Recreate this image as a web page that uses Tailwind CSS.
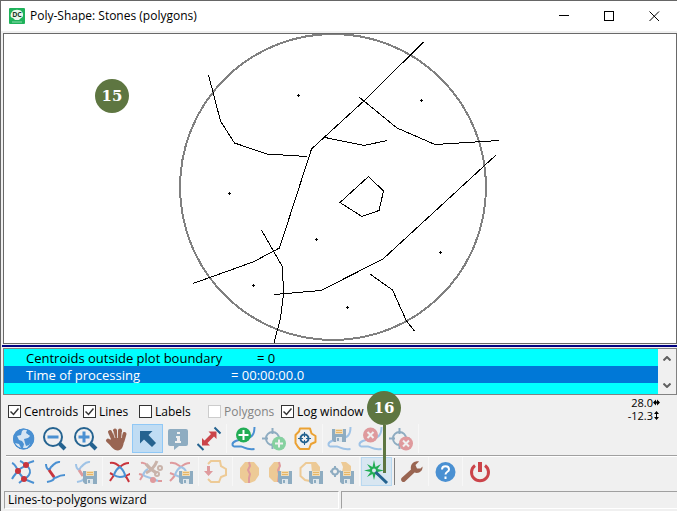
<!DOCTYPE html>
<html lang="en">
  <head>
    <meta charset="UTF-8" />
    <meta name="viewport" content="width=device-width, initial-scale=1.0" />
    <title>Poly-Shape: Stones (polygons)</title>
    <script src="https://cdn.jsdelivr.net/npm/@tailwindcss/browser@4"></script>
  </head>
  <body class="bg-[#f0f0f0] text-black font-['Open_Sans',sans-serif] text-[12px] leading-4">
    <!-- shared icon parts -->
    <svg class="hidden">
      <symbol id="disk" viewBox="0 0 14 13">
        <path d="M0 0H14V13H2L0 11Z" fill="#8eacc1" />
        <path d="M3 0H11V5H3Z" fill="#f0dcb8" />
        <path d="M4 1H10V2H4ZM4 3H10V4H4Z" fill="#e9b765" />
        <path d="M4 8H10V13H4Z" fill="#dfe7ec" />
        <path d="M5 9H7V12H5Z" fill="#8eacc1" />
      </symbol>
      <symbol id="curve" viewBox="0 0 25 25">
        <path
          d="M23.5 1C23.5 9 21 11 14 13C7 14 2 15 1.5 18C1 22 6 20 10 20.5C14 21 14 24 23.5 23"
          fill="none"
          stroke="currentColor"
          stroke-width="2"
        />
      </symbol>
      <symbol id="target" viewBox="0 0 25 25">
        <g fill="none" stroke="currentColor" stroke-width="2">
          <circle cx="10.5" cy="12.5" r="6.5" />
          <path d="M10.5 2V8M10.5 17V23M0 12.5H6M15 12.5H21" />
        </g>
      </symbol>
    </svg>

    <div class="flex min-h-screen flex-col border-t border-l border-[#666]">
      <header class="flex h-[30px] items-center bg-white pl-2">
        <svg class="h-4 w-4" viewBox="0 0 16 16">
          <rect width="16" height="16" rx="1" fill="#1fb25a" />
          <path
            d="M3 4C4 1 12 1 13 4C15 6 14 10 12 10L10 12H6L4 10C1 10 1 6 3 4Z"
            fill="#e9f7ee"
          />
          <path d="M3 14H13" stroke="#8fdcae" />
          <text
            x="8"
            y="9"
            text-anchor="middle"
            font-size="7"
            font-weight="700"
            fill="#1b3b2a"
          >DC</text>
        </svg>
        <h1 class="ml-[5px] flex-1">Poly-Shape: Stones (polygons)</h1>
        <button class="grid h-[30px] w-[45px] place-items-center" aria-label="Minimize">
          <svg class="h-[11px] w-[11px]" viewBox="0 0 11 11">
            <path d="M0 4.5H10" stroke="#000" />
          </svg>
        </button>
        <button class="grid h-[30px] w-[45px] place-items-center" aria-label="Maximize">
          <svg class="h-[11px] w-[11px]" viewBox="0 0 11 11">
            <rect x="0.5" y="0.5" width="9" height="9" fill="none" stroke="#000" />
          </svg>
        </button>
        <button class="grid h-[30px] w-[45px] place-items-center" aria-label="Close">
          <svg class="h-[11px] w-[11px]" viewBox="0 0 11 11">
            <path d="M0.5 0.5L10 10M10 0.5L0.5 10" stroke="#000" fill="none" />
          </svg>
        </button>
      </header>

      <!-- plot -->
      <main class="mt-[2px] ml-[2px] flex-1 border border-[#696969] bg-white">
        <svg class="block w-full" viewBox="4 34 672 309" shape-rendering="crispEdges">
          <circle cx="333" cy="187" r="153" fill="none" stroke="#808080" stroke-width="2" />
          <g fill="none" stroke="#000">
            <path d="M208.5 75L220.5 121L234.5 143L267 154L307 156.5" />
            <path d="M423.5 42L366 99L311.5 149L279.5 248L253 262L193 283.5" />
            <path d="M325 137.5L364 145.5L387 140.5" />
            <path d="M359 97L397 128L435 144.5L499 140.5" />
            <path d="M496 155L383 259L321 290.5L274 294.5" />
            <path d="M261.5 230L282.5 267L283.5 294L280.5 318L274 343" />
            <path d="M370 274L392.5 290L406.5 321L414.5 331" />
            <path d="M340 202.5L368.5 176.5L383.5 191L379 210.5L362 216.5Z" />
          </g>
          <path
            d="M297 95.5h3M298.5 94v3M420 100.5h3M421.5 99v3M228 193.5h3M229.5 192v3M315 239.5h3M316.5 238v3M252 285.5h3M253.5 284v3M439 252.5h3M440.5 251v3M346 307.5h3M347.5 306v3"
            stroke="#000"
          />
        </svg>
      </main>
      <div class="mt-px ml-px h-[2px] bg-[#000080]"></div>

      <!-- log -->
      <section class="mt-px ml-[2px] flex h-[47px] border border-[#828282] bg-[#00ffff]">
        <ul class="flex-1 text-[13px] leading-[19px]">
          <li class="flex h-[17px] pl-[22px]">
            <span class="w-[231px]">Centroids outside plot boundary</span><span>= 0</span>
          </li>
          <li class="flex h-[17px] bg-[#0078d7] pl-[22px] text-white">
            <span class="w-[205px]">Time of processing</span><span>= 00:00:00.0</span>
          </li>
        </ul>
        <div class="flex w-[18px] flex-col justify-between bg-[#f0f0f0]">
          <button class="grid h-[18px] place-items-center" aria-label="Scroll up">
            <svg class="h-[5px] w-2" viewBox="0 0 8 5">
              <path d="M0.5 4.5L4 1L7.5 4.5" fill="none" stroke="#606060" stroke-width="2" />
            </svg>
          </button>
          <button class="grid h-[18px] place-items-center" aria-label="Scroll down">
            <svg class="h-[5px] w-2" viewBox="0 0 8 5">
              <path d="M0.5 0.5L4 4L7.5 0.5" fill="none" stroke="#606060" stroke-width="2" />
            </svg>
          </button>
        </div>
      </section>

      <!-- layer switches -->
      <div class="flex h-[29px] items-center pr-[17px] pl-[7px]">
        <form class="grid flex-1 grid-cols-[75px_56px_69px_73px_auto] items-center pt-1">
          <label class="flex items-center gap-[3px]">
            <span class="grid place-items-center">
              <input type="checkbox" checked class="peer col-start-1 row-start-1 h-[13px] w-[13px] appearance-none border border-[#333] bg-white" />
              <svg class="pointer-events-none invisible col-start-1 row-start-1 h-[9px] w-[9px] peer-checked:visible" viewBox="0 0 9 9"><path d="M0.5 4.5L3.5 7.5L8.5 1.5" fill="none" stroke="#333" stroke-width="1.5" /></svg>
            </span>
            Centroids
          </label>
          <label class="flex items-center gap-[3px]">
            <span class="grid place-items-center">
              <input type="checkbox" checked class="peer col-start-1 row-start-1 h-[13px] w-[13px] appearance-none border border-[#333] bg-white" />
              <svg class="pointer-events-none invisible col-start-1 row-start-1 h-[9px] w-[9px] peer-checked:visible" viewBox="0 0 9 9"><path d="M0.5 4.5L3.5 7.5L8.5 1.5" fill="none" stroke="#333" stroke-width="1.5" /></svg>
            </span>
            Lines
          </label>
          <label class="flex items-center gap-[3px]">
            <span class="grid place-items-center">
              <input type="checkbox" class="peer col-start-1 row-start-1 h-[13px] w-[13px] appearance-none border border-[#333] bg-white" />
              <svg class="pointer-events-none invisible col-start-1 row-start-1 h-[9px] w-[9px] peer-checked:visible" viewBox="0 0 9 9"><path d="M0.5 4.5L3.5 7.5L8.5 1.5" fill="none" stroke="#333" stroke-width="1.5" /></svg>
            </span>
            Labels
          </label>
          <label class="flex items-center gap-[3px] text-[#838383]">
            <input type="checkbox" disabled class="h-[13px] w-[13px] appearance-none border border-[#ccc] bg-white" />
            Polygons
          </label>
          <label class="flex items-center gap-[3px]">
            <span class="grid place-items-center">
              <input type="checkbox" checked class="peer col-start-1 row-start-1 h-[13px] w-[13px] appearance-none border border-[#333] bg-white" />
              <svg class="pointer-events-none invisible col-start-1 row-start-1 h-[9px] w-[9px] peer-checked:visible" viewBox="0 0 9 9"><path d="M0.5 4.5L3.5 7.5L8.5 1.5" fill="none" stroke="#333" stroke-width="1.5" /></svg>
            </span>
            Log window
          </label>
        </form>
        <div class="self-start pt-px text-[11px] leading-[13px]">
          <div class="flex items-center justify-end">
            28.0
            <svg class="h-[7px] w-[7px]" viewBox="0 0 7 7">
              <path d="M0 3.5L3 0.5V6.5ZM7 3.5L4 0.5V6.5Z" />
              <path d="M1 3.5H6" stroke="#000" stroke-width="2" />
            </svg>
          </div>
          <div class="flex items-center justify-end">
            -12.3
            <svg class="h-[9px] w-[7px]" viewBox="0 0 7 9">
              <path d="M3.5 0L6 3H1ZM3.5 9L6 6H1Z" />
              <path d="M3.5 1V8" stroke="#000" />
            </svg>
          </div>
        </div>
      </div>

      <!-- edit tools -->
      <div class="flex h-[29px] pl-[7px]">
        <button class="grid h-[29px] w-[31px] place-items-center" title="Full view">
          <svg class="h-[25px] w-[25px]" viewBox="0 0 25 25">
            <circle cx="12.5" cy="13" r="10.5" fill="#4a90d2" />
            <path d="M13 3.5L16 4L15 7L18 9L21 8L22 12L18 12L16 15L19 18L16 22L12 22L13 18L11 15L8 14L6 10L10 9L11 5Z" fill="#d6e5f3" />
            <path d="M17 3.5C22 5 24 10 23 15L20 20L19 16L16 13L19 10L16 7Z" fill="#4a90d2" />
            <path d="M13 13L17 12L20 15L18 19L15 20L14 17Z" fill="#4a90d2" />
            <path d="M4 17L8 18L10 22C7 21 5 19 4 17Z" fill="#d6e5f3" />
            <circle cx="12.5" cy="13" r="10" fill="none" stroke="#4a90d2" />
          </svg>
        </button>
        <button class="grid h-[29px] w-[31px] place-items-center" title="Zoom out">
          <svg class="h-[25px] w-[25px]" viewBox="0 0 25 25" fill="none">
            <circle cx="11" cy="11" r="9" stroke="#256390" stroke-width="2" />
            <path d="M5.5 11H16.5" stroke="#4a90d2" stroke-width="3" />
            <path d="M17.5 17.5L23 23" stroke="#256390" stroke-width="4" />
          </svg>
        </button>
        <button class="grid h-[29px] w-[31px] place-items-center" title="Zoom in">
          <svg class="h-[25px] w-[25px]" viewBox="0 0 25 25" fill="none">
            <circle cx="11" cy="11" r="9" stroke="#256390" stroke-width="2" />
            <path d="M5.5 11H16.5M11 5.5V16.5" stroke="#4a90d2" stroke-width="3" />
            <path d="M17.5 17.5L23 23" stroke="#256390" stroke-width="4" />
          </svg>
        </button>
        <button class="grid h-[29px] w-[31px] place-items-center" title="Pan">
          <svg class="h-[25px] w-[25px]" viewBox="0 0 25 25">
            <g fill="none" stroke="#996552" stroke-width="4" stroke-linecap="round">
              <path d="M6 6L9.5 14M11 4.5L12 13M16 4.5V13M20.5 8L18.5 15M4 14.5L9 19" />
            </g>
            <path d="M8 12H20C20 18 19 24 14 24.5C9 24.5 7 20 4 16Z" fill="#996552" />
            <path d="M9 5L11 12M13.5 4V12M18 6L17.5 12" stroke="#f0f0f0" stroke-width="0.7" />
          </svg>
        </button>
        <button class="grid h-[29px] w-[31px] place-items-center border border-[#90c8f6] bg-[#c0dcf3]" title="Select" aria-pressed="true">
          <svg class="h-[25px] w-[25px]" viewBox="0 0 25 25">
            <path d="M5 5H17.5L13.5 9L21 17L17 21L9 13.5L5 17.5Z" fill="#256390" />
          </svg>
        </button>
        <button class="grid h-[29px] w-[31px] place-items-center" title="Info">
          <svg class="h-[25px] w-[25px]" viewBox="0 0 25 25">
            <path d="M4 3H20Q22 3 22 5V18Q22 20 20 20H13L8 24V20H4Q2 20 2 18V5Q2 3 4 3Z" fill="#8eacc1" />
            <path d="M11 6H14V8H11ZM10 10H14V15H15V17H9V15H11V12H10Z" fill="#f0f0f0" />
          </svg>
        </button>
        <button class="grid h-[29px] w-[31px] place-items-center" title="Measure">
          <svg class="h-[25px] w-[25px]" viewBox="0 0 25 25">
            <path d="M19.5 5.5V13L17 10.5L10.5 17L13 19.5H5V12L7.5 14.5L14 8L11.5 5.5Z" fill="#cb444a" />
            <path d="M0.5 18L6.5 24M17.5 1.5L23.5 7.5" stroke="#256390" stroke-width="2" />
          </svg>
        </button>
        <div class="flex w-[3px] justify-center"><i class="w-px bg-[#f7f7f7]"></i></div>
        <button class="grid h-[29px] w-[31px] place-items-center" title="Add line">
          <svg class="h-[25px] w-[25px]" viewBox="0 0 25 25">
            <use href="#curve" class="text-[#4a90d2]" />
            <circle cx="12.5" cy="9" r="7.5" fill="#22ad55" />
            <path d="M12.5 4V14M7.5 9H17.5" stroke="#fff" stroke-width="2" />
          </svg>
        </button>
        <button class="grid h-[29px] w-[31px] place-items-center" title="Add centroid" disabled>
          <svg class="h-[25px] w-[25px]" viewBox="0 0 25 25">
            <use href="#target" class="text-[#8eacc1]" />
            <circle cx="17" cy="17.5" r="7" fill="#86d1a0" />
            <path d="M17 13.5V21.5M13 17.5H21" stroke="#f0f0f0" stroke-width="2" />
          </svg>
        </button>
        <button class="grid h-[29px] w-[31px] place-items-center" title="Polygon centroid">
          <svg class="h-[25px] w-[25px]" viewBox="0 0 25 25" fill="none">
            <path d="M7 2.5H17L18.5 7.5L22.5 10V16L18 18L16 23H7L5 21L2.5 17V9L6 5.5Z" stroke="#eba132" stroke-width="2" stroke-linejoin="round" />
            <circle cx="11.5" cy="12.5" r="4" stroke="#256390" stroke-width="2" />
            <path d="M11.5 6V11M11.5 14V19M5 12.5H10M13 12.5H18" stroke="#256390" />
          </svg>
        </button>
        <div class="flex w-[3px] justify-center"><i class="w-px bg-[#f7f7f7]"></i></div>
        <button class="grid h-[29px] w-[31px] place-items-center" title="Save line" disabled>
          <svg class="h-[25px] w-[25px]" viewBox="0 0 25 25">
            <use href="#curve" class="text-[#9fc3e6]" />
            <use href="#disk" x="5" y="3" width="14" height="13" />
          </svg>
        </button>
        <button class="grid h-[29px] w-[31px] place-items-center" title="Delete line" disabled>
          <svg class="h-[25px] w-[25px]" viewBox="0 0 25 25">
            <use href="#curve" class="text-[#9fc3e6]" />
            <circle cx="12.5" cy="9" r="7.5" fill="#df9a9d" />
            <path d="M9.5 6L15.5 12M15.5 6L9.5 12" stroke="#f0f0f0" stroke-width="2" />
          </svg>
        </button>
        <button class="grid h-[29px] w-[31px] place-items-center" title="Delete centroid" disabled>
          <svg class="h-[25px] w-[25px]" viewBox="0 0 25 25">
            <use href="#target" class="text-[#8eacc1]" />
            <circle cx="17" cy="17.5" r="7" fill="#df9a9d" />
            <path d="M14 14.5L20 20.5M20 14.5L14 20.5" stroke="#f0f0f0" stroke-width="2" />
          </svg>
        </button>
        <div class="flex w-[3px] justify-center"><i class="w-px bg-[#f7f7f7]"></i></div>
      </div>
      <div class="mt-[2px] ml-[5px] h-[2px] border-t border-b border-t-[#a0a0a0] border-b-white"></div>

      <!-- polygon tools -->
      <div class="flex h-[29px] pl-[7px]">
        <button class="grid h-[29px] w-[31px] place-items-center" title="Find nodes">
          <svg class="h-[25px] w-[25px]" viewBox="0 0 25 25">
            <path d="M1 4C4 5 5 8 7 11.5C9 16 11 17 13 20L23 24M9 2C12 3 13 5 15 6C19 9 20 13 18 16C17 18 15 19 13 20L8 24M23 2C19 3 17 4 15 6C12 9 9 9 7 11.5C5 15 3 16 1 20" fill="none" stroke="#4a90d2" stroke-width="2" />
            <circle cx="15" cy="6" r="3" fill="#c9343c" />
            <circle cx="7" cy="12" r="3" fill="#c9343c" />
            <circle cx="13" cy="20" r="3" fill="#c9343c" />
          </svg>
        </button>
        <button class="grid h-[29px] w-[31px] place-items-center" title="Join lines">
          <svg class="h-[25px] w-[25px]" viewBox="0 0 25 25" fill="none" stroke-width="2">
            <path d="M18 3C13 2 12 6 9 8C8 10 7 11 7 11M4 5C4 8 5 10 7 11M23 16C18 16 15 18 13 19M12 17C13 21 10 22 5 23" stroke="#4a90d2" />
            <path d="M7 11L12 18" stroke="#c9343c" stroke-width="3" />
          </svg>
        </button>
        <button class="grid h-[29px] w-[31px] place-items-center" title="Save joined lines" disabled>
          <svg class="h-[25px] w-[25px]" viewBox="0 0 25 25">
            <g fill="none" stroke-width="2">
              <path d="M17 3C12 2 11 6 8 8L6 11M3 5C3 8 4 10 6 11M11 17C12 21 9 22 4 23" stroke="#9fc3e6" />
              <path d="M6 11L10 17" stroke="#df9a9d" stroke-width="3" />
            </g>
            <use href="#disk" x="10" y="12" width="14" height="13" />
          </svg>
        </button>
        <div class="flex w-[3px] justify-center"><i class="w-px bg-[#f7f7f7]"></i></div>
        <button class="grid h-[29px] w-[31px] place-items-center" title="Build polygons">
          <svg class="h-[25px] w-[25px]" viewBox="0 0 25 25" fill="none" stroke-width="2">
            <path d="M3 4C8 3 11 6 13 8M22 4C18 4 15 6 13 8M7 16C6 18 4 20 3 22M3 14C5 15 6 16 7 16M18 17C20 18 21 21 22 23M18 17C20 17 22 15 23 15" stroke="#c9343c" />
            <path d="M13 8C9 10 8 13 7 16C11 19 15 18 18 17C18 13 15 10 13 8Z" stroke="#4a90d2" />
          </svg>
        </button>
        <button class="grid h-[29px] w-[31px] place-items-center" title="Cut dangles" disabled>
          <svg class="h-[25px] w-[25px]" viewBox="0 0 25 25" fill="none" stroke-width="2">
            <path d="M3 4C7 3 9 6 11 8M1 15L5 16L2 21M20 22L24 22" stroke="#df9a9d" />
            <path d="M5 16C6 13 8 11 10 10M5 16C9 19 12 18 15 20L20 22" stroke="#9fc3e6" />
            <path d="M19 2C17 7 14 11 8 14M8 5C11 9 15 12 19 14" stroke="#c9b3aa" stroke-width="3" />
            <circle cx="22" cy="9" r="2" stroke="#c9b3aa" />
            <circle cx="19" cy="15" r="2" stroke="#c9b3aa" />
            <circle cx="15" cy="21" r="3" fill="#df9a9d" />
          </svg>
        </button>
        <button class="grid h-[29px] w-[31px] place-items-center" title="Save polygons' lines" disabled>
          <svg class="h-[25px] w-[25px]" viewBox="0 0 25 25">
            <g fill="none" stroke-width="2">
              <path d="M1 4C7 3 9 6 12 8M21 4C17 4 14 6 12 8M1 14L6 16C5 18 3 20 1 22" stroke="#df9a9d" />
              <path d="M12 8C8 10 7 13 6 16L11 18M12 8C15 9 16 10 17 12" stroke="#9fc3e6" />
            </g>
            <use href="#disk" x="10" y="12" width="14" height="13" />
          </svg>
        </button>
        <div class="flex w-[3px] justify-center"><i class="w-px bg-[#f7f7f7]"></i></div>
        <button class="grid h-[29px] w-[31px] place-items-center" title="Import polygon" disabled>
          <svg class="h-[25px] w-[25px]" viewBox="0 0 25 25">
            <path d="M5 5L8 2H17L18 7L23 10V16L18 18L16 23H8L5 20" fill="none" stroke="#edca96" stroke-width="2" />
            <path d="M4 7H7V12H10L5.5 17L1 12H4Z" fill="#df9a9d" />
          </svg>
        </button>
        <div class="flex w-[3px] justify-center"><i class="w-px bg-[#f7f7f7]"></i></div>
        <button class="grid h-[29px] w-[31px] place-items-center" title="Split polygons" disabled>
          <svg class="h-[25px] w-[25px]" viewBox="0 0 25 25">
            <path d="M8 3H17L22 9V16L18 22L13 24H8L3 19V9Z" fill="#edca96" />
            <path d="M12 3L13 7L11 11L13 15L12 19L12 24" fill="none" stroke="#df9a9d" stroke-width="2" />
          </svg>
        </button>
        <button class="grid h-[29px] w-[31px] place-items-center" title="Save split polygons" disabled>
          <svg class="h-[25px] w-[25px]" viewBox="0 0 25 25">
            <path d="M6 3H12V23H6L1 18V9Z" fill="#edca96" />
            <path d="M11 3L12 7L10 11L11 15L10 23" fill="none" stroke="#df9a9d" stroke-width="2" />
            <use href="#disk" x="10" y="12" width="14" height="13" />
          </svg>
        </button>
        <button class="grid h-[29px] w-[31px] place-items-center" title="Save polygons" disabled>
          <svg class="h-[25px] w-[25px]" viewBox="0 0 25 25">
            <path d="M12 3H17L21 8V14H13Z" fill="#edca96" />
            <path d="M15 4H7L1.5 9V17L6 21L11 22" fill="none" stroke="#edca96" stroke-width="2" />
            <use href="#disk" x="10" y="12" width="14" height="13" />
          </svg>
        </button>
        <button class="grid h-[29px] w-[31px] place-items-center" title="Save centroids" disabled>
          <svg class="h-[25px] w-[25px]" viewBox="0 0 25 25">
            <path d="M11 3H16L21 7V13H12L13 8Z" fill="#edca96" />
            <circle cx="5" cy="12.5" r="3" fill="none" stroke="#8eacc1" stroke-width="2" />
            <path d="M5 7V10M5 15V18M0 12.5H2M8 12.5H11" stroke="#8eacc1" stroke-width="2" />
            <use href="#disk" x="10" y="12" width="14" height="13" />
          </svg>
        </button>
        <div class="flex w-[3px] justify-center"><i class="w-px bg-[#f7f7f7]"></i></div>
        <button class="relative grid h-[29px] w-[31px] place-items-center border border-[#b8d8f0] bg-[#d8e6f1]" title="Lines-to-polygons wizard">
          <svg class="h-[25px] w-[25px]" viewBox="0 0 25 25">
            <path d="M10 1L11.5 8L17 5L13.5 10L20 11.5L13.5 13L16 18L11.5 15L10 21L8.5 15L3 18L6.5 13L0 11.5L6.5 10L3 5L8.5 8Z" fill="#22ad55" />
            <circle cx="10" cy="11.5" r="2" fill="#d8e6f1" />
            <path d="M11.5 13L23 24" stroke="#256390" stroke-width="3" />
          </svg>
          <!-- step marker -->
          <span class="absolute bottom-3 left-[5px] flex w-[34px] flex-col items-center">
            <b class="grid h-[34px] w-[34px] place-items-center rounded-full bg-[#5e7641] font-['DejaVu_Serif',serif] text-[15px] text-white">16</b>
            <i class="h-[48px] w-[3px] bg-[#5e7641]"></i>
          </span>
        </button>
        <div class="flex w-1 justify-center py-px"><i class="w-px bg-[#808080]"></i></div>
        <button class="grid h-[29px] w-[31px] place-items-center" title="Settings">
          <svg class="h-[25px] w-[25px]" viewBox="0 0 25 25">
            <path d="M17 2.5C18.5 2 20 2.5 20 2.5L16.5 6L18 9.5L21.5 9.5L23.5 7.5C24 12 20 15 15.5 13.5L6 22.5C4 24 1 22 2.5 19L12 10.5C11 6 14 3 17 2.5Z" fill="#996552" />
          </svg>
        </button>
        <div class="flex w-[3px] justify-center"><i class="w-px bg-[#f7f7f7]"></i></div>
        <button class="grid h-[29px] w-[31px] place-items-center" title="Help">
          <svg class="h-[25px] w-[25px]" viewBox="0 0 25 25">
            <circle cx="12.5" cy="13" r="10" fill="#4a90d2" />
            <path d="M9 10.5C9 6 16 6 16 10.5C16 13 12.5 12.5 12.5 15.5M12.5 17.5V20" fill="none" stroke="#fff" stroke-width="2" />
          </svg>
        </button>
        <div class="flex w-[3px] justify-center"><i class="w-px bg-[#f7f7f7]"></i></div>
        <button class="grid h-[29px] w-[31px] place-items-center" title="Exit">
          <svg class="h-[25px] w-[25px]" viewBox="0 0 25 25" fill="none" stroke="#cb444a">
            <path d="M8 6.5A8.5 8.5 0 1 0 18 6.5" stroke-width="3" />
            <path d="M13 3V13" stroke-width="4" />
          </svg>
        </button>
      </div>

      <!-- status bar -->
      <footer class="mt-[5px] mb-[2px] ml-[3px] flex gap-[2px]">
        <p class="h-[18px] w-[calc(50%-2px)] border border-t-[#a0a0a0] border-r-white border-b-white border-l-[#a0a0a0] pl-[3px]">Lines-to-polygons wizard</p>
        <p class="h-[18px] flex-1 border border-r-0 border-t-[#a0a0a0] border-b-white border-l-[#a0a0a0]"></p>
      </footer>
    </div>

    <!-- step marker over the plot -->
    <b class="absolute top-[79px] left-[95px] grid h-[34px] w-[34px] place-items-center rounded-full bg-[#5e7641] font-['DejaVu_Serif',serif] text-[15px] text-white">15</b>
  </body>
</html>
